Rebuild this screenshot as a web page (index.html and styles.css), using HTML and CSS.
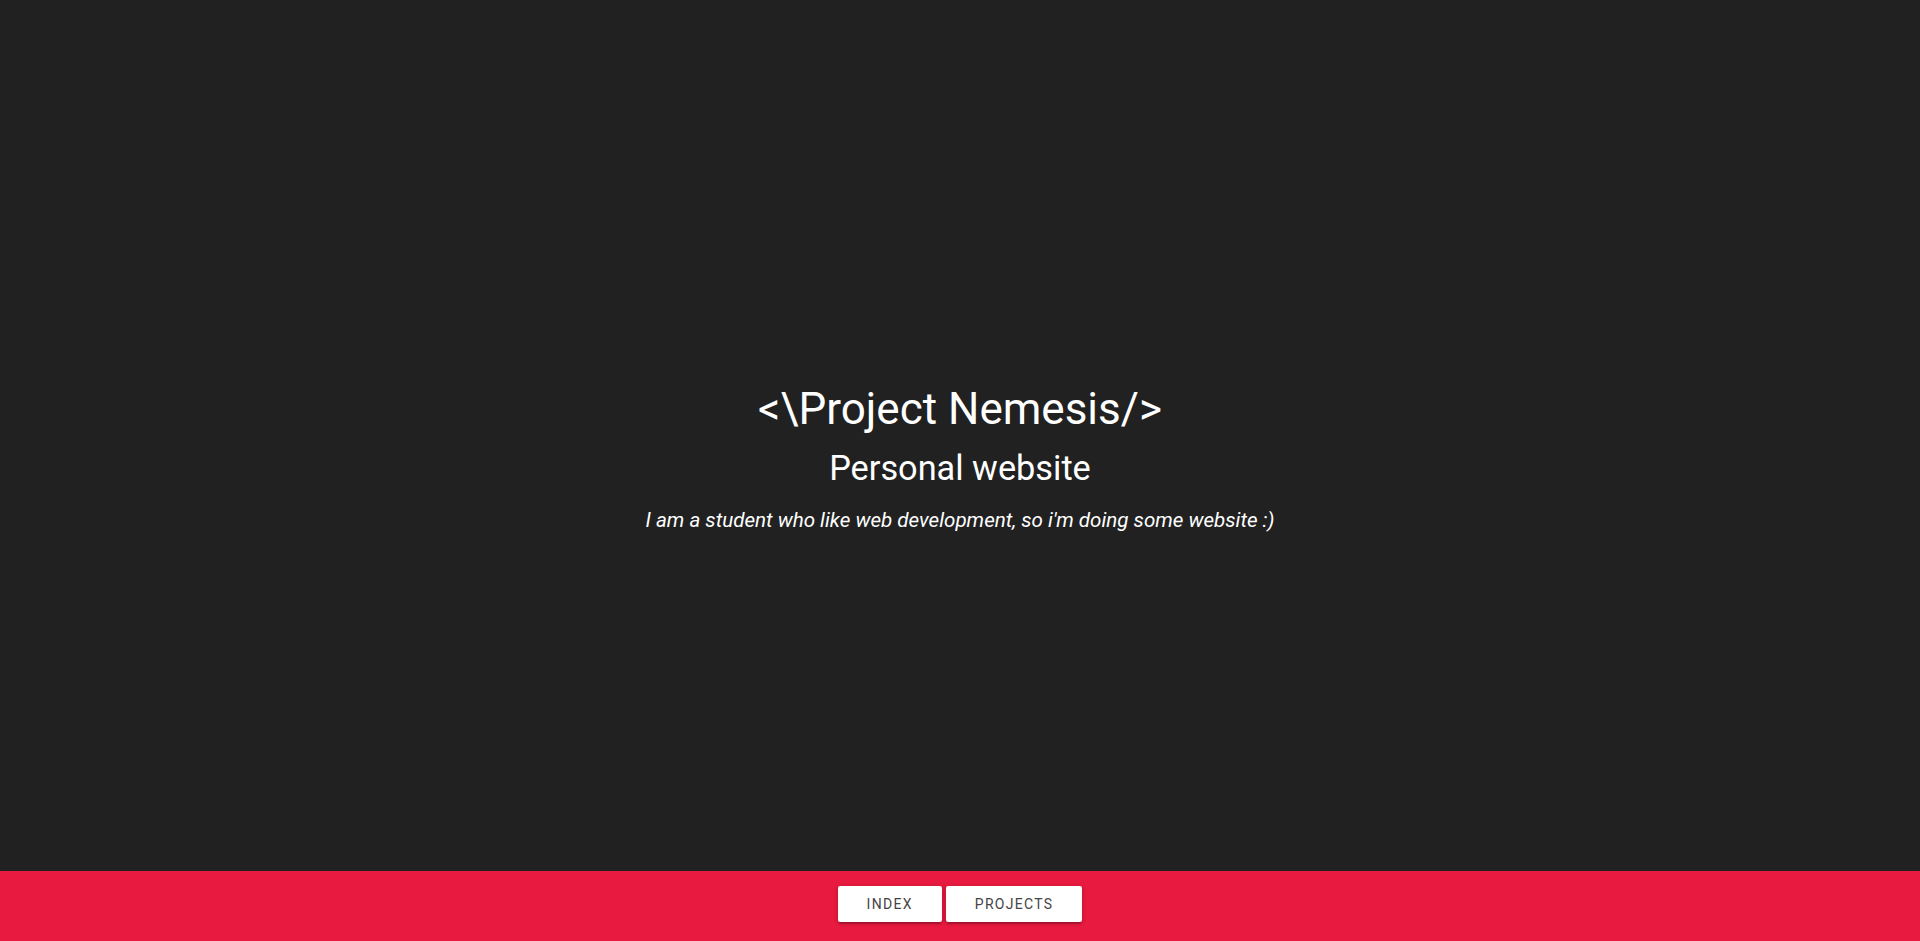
FILE: index.html
```html
<!DOCTYPE html>
<html lang="en">
<head>
<meta charset="utf-8">
<title>Project Nemesis</title>
<link rel="stylesheet" href="styles.css">
</head>
<body>
<main class="hero">
  <h1 class="title">&lt;\Project Nemesis/&gt;</h1>
  <h2 class="subtitle">Personal website</h2>
  <p class="tagline">I am a student who like web development, so i'm doing some website :)</p>
</main>
<footer class="footer">
  <a class="btn" href="#">Index</a>
  <a class="btn" href="#">Projects</a>
</footer>
</body>
</html>
```

FILE: styles.css
```css
* { box-sizing: border-box; }
html, body { height: 100%; }
body {
  margin: 0;
  background: #212121;
  color: #ffffff;
  font-family: Roboto, "Liberation Sans", sans-serif;
  display: flex;
  flex-direction: column;
}
.hero {
  flex: 1;
  display: flex;
  flex-direction: column;
  align-items: center;
  justify-content: center;
  text-align: center;
  padding-top: 45px;
}
.title {
  margin: 0;
  font-size: 44px;
  font-weight: 400;
  line-height: 1.2;
}
.subtitle {
  margin: 12px 0 0;
  font-size: 34.3px;
  font-weight: 400;
  line-height: 1.2;
}
.tagline {
  margin: 19px 0 0;
  font-size: 20.6px;
  font-style: italic;
  line-height: 1.2;
}
.footer {
  height: 70px;
  flex: none;
  background: #e81a3f;
  display: flex;
  justify-content: center;
  align-items: center;
  gap: 4px;
  padding-bottom: 4px;
}
.btn {
  display: inline-block;
  height: 36px;
  line-height: 36px;
  padding: 0 29px;
  background: #ffffff;
  color: #444444;
  text-decoration: none;
  text-transform: uppercase;
  font-size: 14px;
  letter-spacing: 1.3px;
  border-radius: 2px;
  box-shadow: 0 2px 2px 0 rgba(0,0,0,0.14), 0 3px 1px -2px rgba(0,0,0,0.12), 0 1px 5px 0 rgba(0,0,0,0.2);
}
```
